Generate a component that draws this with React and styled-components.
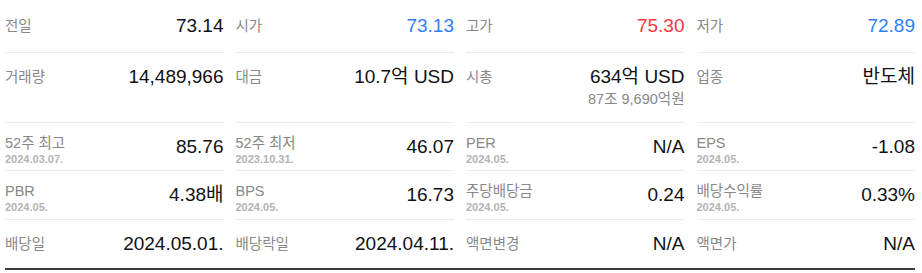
import React from 'react'
import styled, { createGlobalStyle } from 'styled-components'

const GlobalStyle = createGlobalStyle`
  body {
    margin: 0;
    background: #fff;
    font-family: "Liberation Sans", "Noto Sans CJK KR", sans-serif;
  }
`

const Wrapper = styled.div`
  padding: 0 7px 0 5px;
`

const Table = styled.div`
  display: grid;
  grid-template-columns: repeat(4, 1fr);
  column-gap: 12px;
  border-bottom: 2px solid #3c3c3c;
`

const Cell = styled.div`
  height: ${p => p.$h}px;
  box-sizing: border-box;
  display: flex;
  justify-content: space-between;
  align-items: ${p => (p.$top ? 'flex-start' : 'center')};
  padding-top: ${p => (p.$top ? 12 : 0)}px;
  border-bottom: ${p => (p.$last ? 'none' : '1px solid #ebebeb')};
`

const LabelBox = styled.div`
  display: flex;
  flex-direction: column;
  align-self: ${p => (p.$dated ? 'flex-start' : 'auto')};
  padding-top: ${p => (p.$dated ? 10 : 0)}px;
`

const Label = styled.span`
  font-size: 14.5px;
  line-height: ${p => (p.$dated ? 20 : 24)}px;
  color: #888;
  white-space: nowrap;
`

const DateText = styled.span`
  font-size: 11px;
  line-height: 12px;
  font-weight: 700;
  color: #b3b3b3;
`

const ValueBox = styled.div`
  display: flex;
  flex-direction: column;
  align-items: flex-end;
`

const Value = styled.span`
  font-size: 19px;
  line-height: 24px;
  white-space: nowrap;
  color: ${p => (p.$tone === 'up' ? '#f2373f' : p.$tone === 'down' ? '#2f7ff5' : '#111')};
`

const SubValue = styled.span`
  font-size: 14.5px;
  line-height: 20px;
  color: #888;
  white-space: nowrap;
`

const rows = [
  {
    h: 53,
    items: [
      { label: '전일', value: '73.14' },
      { label: '시가', value: '73.13', tone: 'down' },
      { label: '고가', value: '75.30', tone: 'up' },
      { label: '저가', value: '72.89', tone: 'down' },
    ],
  },
  {
    h: 70,
    top: true,
    items: [
      { label: '거래량', value: '14,489,966' },
      { label: '대금', value: '10.7억 USD' },
      { label: '시총', value: '634억 USD', sub: '87조 9,690억원' },
      { label: '업종', value: '반도체' },
    ],
  },
  {
    h: 48,
    items: [
      { label: '52주 최고', date: '2024.03.07.', value: '85.76' },
      { label: '52주 최저', date: '2023.10.31.', value: '46.07' },
      { label: 'PER', date: '2024.05.', value: 'N/A' },
      { label: 'EPS', date: '2024.05.', value: '-1.08' },
    ],
  },
  {
    h: 49,
    items: [
      { label: 'PBR', date: '2024.05.', value: '4.38배' },
      { label: 'BPS', date: '2024.05.', value: '16.73' },
      { label: '주당배당금', date: '2024.05.', value: '0.24' },
      { label: '배당수익률', date: '2024.05.', value: '0.33%' },
    ],
  },
  {
    h: 48,
    last: true,
    items: [
      { label: '배당일', value: '2024.05.01.' },
      { label: '배당락일', value: '2024.04.11.' },
      { label: '액면변경', value: 'N/A' },
      { label: '액면가', value: 'N/A' },
    ],
  },
]

const App = () => {
  return (
    <Wrapper>
      <GlobalStyle />
      <Table>
        {rows.map((row, r) =>
          row.items.map((it, i) => (
            <Cell key={r + '-' + i} $h={row.h} $top={row.top} $last={row.last}>
              <LabelBox $dated={!!it.date}>
                <Label $dated={!!it.date}>{it.label}</Label>
                {it.date && <DateText>{it.date}</DateText>}
              </LabelBox>
              <ValueBox>
                <Value $tone={it.tone}>{it.value}</Value>
                {it.sub && <SubValue>{it.sub}</SubValue>}
              </ValueBox>
            </Cell>
          ))
        )}
      </Table>
    </Wrapper>
  )
}

export default App
